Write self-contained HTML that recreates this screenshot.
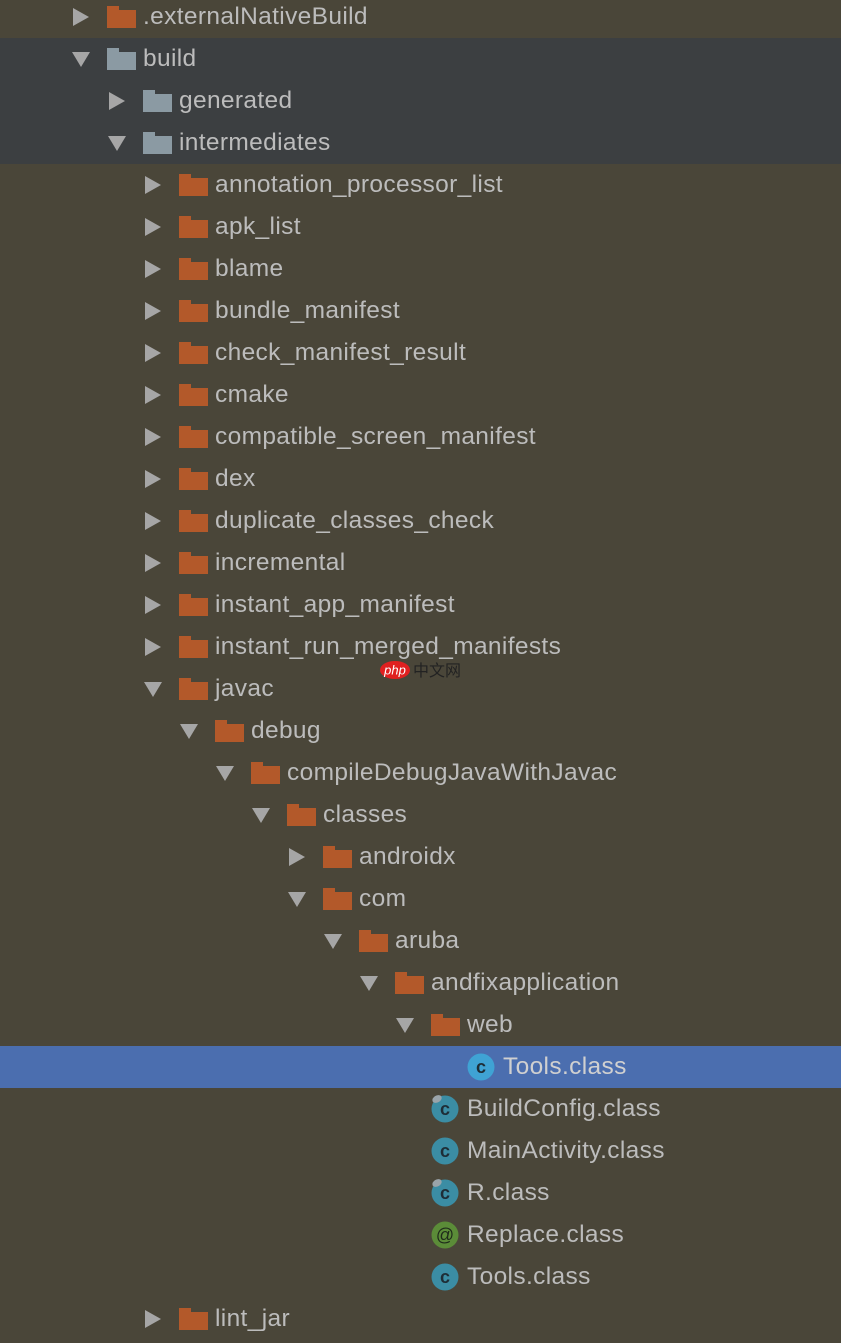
<!DOCTYPE html>
<html><head><meta charset="utf-8"><style>
body{margin:0;width:841px;height:1343px;background:#4a4639;overflow:hidden;position:relative;font-family:"Microsoft YaHei","Liberation Sans","Noto Sans CJK SC",sans-serif}
.r{position:absolute;left:0;width:841px;height:42px}
.s{background:#3c3f41}
.b{background:#4b6eaf}
.t{position:absolute;top:0;line-height:42px;font-size:24.5px;letter-spacing:0.35px;color:#bcbcbc;white-space:nowrap}
.b .t{color:#d0d0d0}
svg{position:absolute}
</style></head><body>
<svg width="0" height="0" style="position:absolute">
<defs>
<symbol id="ar" viewBox="0 0 18 18"><polygon points="1,0 17,9 1,18" fill="#a6a6a6"/></symbol>
<symbol id="ad" viewBox="0 0 18 18"><polygon points="0,2 18,2 9,17" fill="#a6a6a6"/></symbol>
<symbol id="fo" viewBox="0 0 29 22"><path d="M0 0H12V4H29V22H0Z" fill="#b3592a"/></symbol>
<symbol id="fg" viewBox="0 0 29 22"><path d="M0 0H12V4H29V22H0Z" fill="#8b9aa3"/></symbol>
</defs></svg>

<div class="r" style="top:-4px"><svg style="left:72px;top:12px" width="18" height="18"><use href="#ar"/></svg><svg style="left:107px;top:10px" width="29" height="22"><use href="#fo"/></svg><div class="t" style="left:143px">.externalNativeBuild</div></div>
<div class="r s" style="top:38px"><svg style="left:72px;top:12px" width="18" height="18"><use href="#ad"/></svg><svg style="left:107px;top:10px" width="29" height="22"><use href="#fg"/></svg><div class="t" style="left:143px">build</div></div>
<div class="r s" style="top:80px"><svg style="left:108px;top:12px" width="18" height="18"><use href="#ar"/></svg><svg style="left:143px;top:10px" width="29" height="22"><use href="#fg"/></svg><div class="t" style="left:179px">generated</div></div>
<div class="r s" style="top:122px"><svg style="left:108px;top:12px" width="18" height="18"><use href="#ad"/></svg><svg style="left:143px;top:10px" width="29" height="22"><use href="#fg"/></svg><div class="t" style="left:179px">intermediates</div></div>

<div class="r" style="top:164px"><svg style="left:144px;top:12px" width="18" height="18"><use href="#ar"/></svg><svg style="left:179px;top:10px" width="29" height="22"><use href="#fo"/></svg><div class="t" style="left:215px">annotation_processor_list</div></div>
<div class="r" style="top:206px"><svg style="left:144px;top:12px" width="18" height="18"><use href="#ar"/></svg><svg style="left:179px;top:10px" width="29" height="22"><use href="#fo"/></svg><div class="t" style="left:215px">apk_list</div></div>
<div class="r" style="top:248px"><svg style="left:144px;top:12px" width="18" height="18"><use href="#ar"/></svg><svg style="left:179px;top:10px" width="29" height="22"><use href="#fo"/></svg><div class="t" style="left:215px">blame</div></div>
<div class="r" style="top:290px"><svg style="left:144px;top:12px" width="18" height="18"><use href="#ar"/></svg><svg style="left:179px;top:10px" width="29" height="22"><use href="#fo"/></svg><div class="t" style="left:215px">bundle_manifest</div></div>
<div class="r" style="top:332px"><svg style="left:144px;top:12px" width="18" height="18"><use href="#ar"/></svg><svg style="left:179px;top:10px" width="29" height="22"><use href="#fo"/></svg><div class="t" style="left:215px">check_manifest_result</div></div>
<div class="r" style="top:374px"><svg style="left:144px;top:12px" width="18" height="18"><use href="#ar"/></svg><svg style="left:179px;top:10px" width="29" height="22"><use href="#fo"/></svg><div class="t" style="left:215px">cmake</div></div>
<div class="r" style="top:416px"><svg style="left:144px;top:12px" width="18" height="18"><use href="#ar"/></svg><svg style="left:179px;top:10px" width="29" height="22"><use href="#fo"/></svg><div class="t" style="left:215px">compatible_screen_manifest</div></div>
<div class="r" style="top:458px"><svg style="left:144px;top:12px" width="18" height="18"><use href="#ar"/></svg><svg style="left:179px;top:10px" width="29" height="22"><use href="#fo"/></svg><div class="t" style="left:215px">dex</div></div>
<div class="r" style="top:500px"><svg style="left:144px;top:12px" width="18" height="18"><use href="#ar"/></svg><svg style="left:179px;top:10px" width="29" height="22"><use href="#fo"/></svg><div class="t" style="left:215px">duplicate_classes_check</div></div>
<div class="r" style="top:542px"><svg style="left:144px;top:12px" width="18" height="18"><use href="#ar"/></svg><svg style="left:179px;top:10px" width="29" height="22"><use href="#fo"/></svg><div class="t" style="left:215px">incremental</div></div>
<div class="r" style="top:584px"><svg style="left:144px;top:12px" width="18" height="18"><use href="#ar"/></svg><svg style="left:179px;top:10px" width="29" height="22"><use href="#fo"/></svg><div class="t" style="left:215px">instant_app_manifest</div></div>
<div class="r" style="top:626px"><svg style="left:144px;top:12px" width="18" height="18"><use href="#ar"/></svg><svg style="left:179px;top:10px" width="29" height="22"><use href="#fo"/></svg><div class="t" style="left:215px">instant_run_merged_manifests</div></div>
<div class="r" style="top:668px"><svg style="left:144px;top:12px" width="18" height="18"><use href="#ad"/></svg><svg style="left:179px;top:10px" width="29" height="22"><use href="#fo"/></svg><div class="t" style="left:215px">javac</div></div>
<div class="r" style="top:710px"><svg style="left:180px;top:12px" width="18" height="18"><use href="#ad"/></svg><svg style="left:215px;top:10px" width="29" height="22"><use href="#fo"/></svg><div class="t" style="left:251px">debug</div></div>
<div class="r" style="top:752px"><svg style="left:216px;top:12px" width="18" height="18"><use href="#ad"/></svg><svg style="left:251px;top:10px" width="29" height="22"><use href="#fo"/></svg><div class="t" style="left:287px">compileDebugJavaWithJavac</div></div>
<div class="r" style="top:794px"><svg style="left:252px;top:12px" width="18" height="18"><use href="#ad"/></svg><svg style="left:287px;top:10px" width="29" height="22"><use href="#fo"/></svg><div class="t" style="left:323px">classes</div></div>
<div class="r" style="top:836px"><svg style="left:288px;top:12px" width="18" height="18"><use href="#ar"/></svg><svg style="left:323px;top:10px" width="29" height="22"><use href="#fo"/></svg><div class="t" style="left:359px">androidx</div></div>
<div class="r" style="top:878px"><svg style="left:288px;top:12px" width="18" height="18"><use href="#ad"/></svg><svg style="left:323px;top:10px" width="29" height="22"><use href="#fo"/></svg><div class="t" style="left:359px">com</div></div>
<div class="r" style="top:920px"><svg style="left:324px;top:12px" width="18" height="18"><use href="#ad"/></svg><svg style="left:359px;top:10px" width="29" height="22"><use href="#fo"/></svg><div class="t" style="left:395px">aruba</div></div>
<div class="r" style="top:962px"><svg style="left:360px;top:12px" width="18" height="18"><use href="#ad"/></svg><svg style="left:395px;top:10px" width="29" height="22"><use href="#fo"/></svg><div class="t" style="left:431px">andfixapplication</div></div>
<div class="r" style="top:1004px"><svg style="left:396px;top:12px" width="18" height="18"><use href="#ad"/></svg><svg style="left:431px;top:10px" width="29" height="22"><use href="#fo"/></svg><div class="t" style="left:467px">web</div></div>

<div class="r b" style="top:1046px"><svg style="left:467px;top:7px" width="28" height="28"><circle cx="14" cy="14" r="13.5" fill="#3fa3d4"/><text x="14" y="20" font-family="Liberation Sans" font-size="18" font-weight="bold" text-anchor="middle" fill="#1e2d36">c</text></svg><div class="t" style="left:503px">Tools.class</div></div>
<div class="r" style="top:1088px"><svg style="left:429px;top:5px" width="32" height="32"><circle cx="16" cy="16" r="13.5" fill="#3b8da4"/><ellipse cx="8" cy="6" rx="5" ry="3.5" fill="#9aa4aa" transform="rotate(-30 8 6)"/><text x="16" y="22" font-family="Liberation Sans" font-size="18" font-weight="bold" text-anchor="middle" fill="#1e2d36">c</text></svg><div class="t" style="left:467px">BuildConfig.class</div></div>
<div class="r" style="top:1130px"><svg style="left:431px;top:7px" width="28" height="28"><circle cx="14" cy="14" r="13.5" fill="#3b8da4"/><text x="14" y="20" font-family="Liberation Sans" font-size="18" font-weight="bold" text-anchor="middle" fill="#1e2d36">c</text></svg><div class="t" style="left:467px">MainActivity.class</div></div>
<div class="r" style="top:1172px"><svg style="left:429px;top:5px" width="32" height="32"><circle cx="16" cy="16" r="13.5" fill="#3b8da4"/><ellipse cx="8" cy="6" rx="5" ry="3.5" fill="#9aa4aa" transform="rotate(-30 8 6)"/><text x="16" y="22" font-family="Liberation Sans" font-size="18" font-weight="bold" text-anchor="middle" fill="#1e2d36">c</text></svg><div class="t" style="left:467px">R.class</div></div>
<div class="r" style="top:1214px"><svg style="left:431px;top:7px" width="28" height="28"><circle cx="14" cy="14" r="13.5" fill="#5b8c38"/><text x="14" y="20" font-family="Liberation Sans" font-size="18" text-anchor="middle" fill="#1e2a1a">@</text></svg><div class="t" style="left:467px">Replace.class</div></div>
<div class="r" style="top:1256px"><svg style="left:431px;top:7px" width="28" height="28"><circle cx="14" cy="14" r="13.5" fill="#3b8da4"/><text x="14" y="20" font-family="Liberation Sans" font-size="18" font-weight="bold" text-anchor="middle" fill="#1e2d36">c</text></svg><div class="t" style="left:467px">Tools.class</div></div>
<div class="r" style="top:1298px"><svg style="left:144px;top:12px" width="18" height="18"><use href="#ar"/></svg><svg style="left:179px;top:10px" width="29" height="22"><use href="#fo"/></svg><div class="t" style="left:215px">lint_jar</div></div>

<svg style="left:380px;top:660px" width="84" height="20"><ellipse cx="15" cy="10" rx="15" ry="9" fill="#e02020"/><text x="15" y="14.5" font-family="Liberation Sans" font-size="13" font-style="italic" text-anchor="middle" fill="#fff">php</text><text x="33" y="16" font-family="Noto Sans CJK SC,sans-serif" font-size="16" fill="#222">中文网</text></svg>
</body></html>
